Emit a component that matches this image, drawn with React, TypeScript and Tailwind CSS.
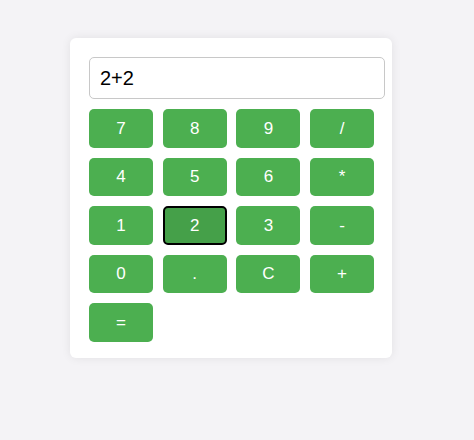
import React from "react";

const keys = ["7", "8", "9", "/", "4", "5", "6", "*", "1", "2", "3", "-", "0", ".", "C", "+", "="];

export default function App() {
  return (
    <div
      className="w-[474px] h-[440px] bg-[#f4f3f6] pt-[38px] pl-[70px]"
      style={{ fontFamily: '"Liberation Sans", Arial, sans-serif' }}
    >
      <div className="w-[322px] h-[320px] bg-white rounded-[6px] shadow-[0_0_10px_rgba(0,0,0,0.08)] pt-[19px] pl-[19px]">
        <div className="w-[296px] h-[42px] border border-[#c8c8c8] rounded-[5px] flex items-center pl-[10px] text-[20px] text-black">
          2+2
        </div>
        <div className="mt-[10px] grid grid-cols-[64px_64px_64px_64px] gap-x-[9.7px] gap-y-[10px]">
          {keys.map((k) => (
            <div
              key={k}
              className={
                k === "2"
                  ? "h-[38.5px] rounded-[5px] bg-[#45a049] border-2 border-black flex items-center justify-center text-white text-[17px]"
                  : "h-[38.5px] rounded-[5px] bg-[#4caf50] flex items-center justify-center text-white text-[17px]"
              }
            >
              {k}
            </div>
          ))}
        </div>
      </div>
    </div>
  );
}
